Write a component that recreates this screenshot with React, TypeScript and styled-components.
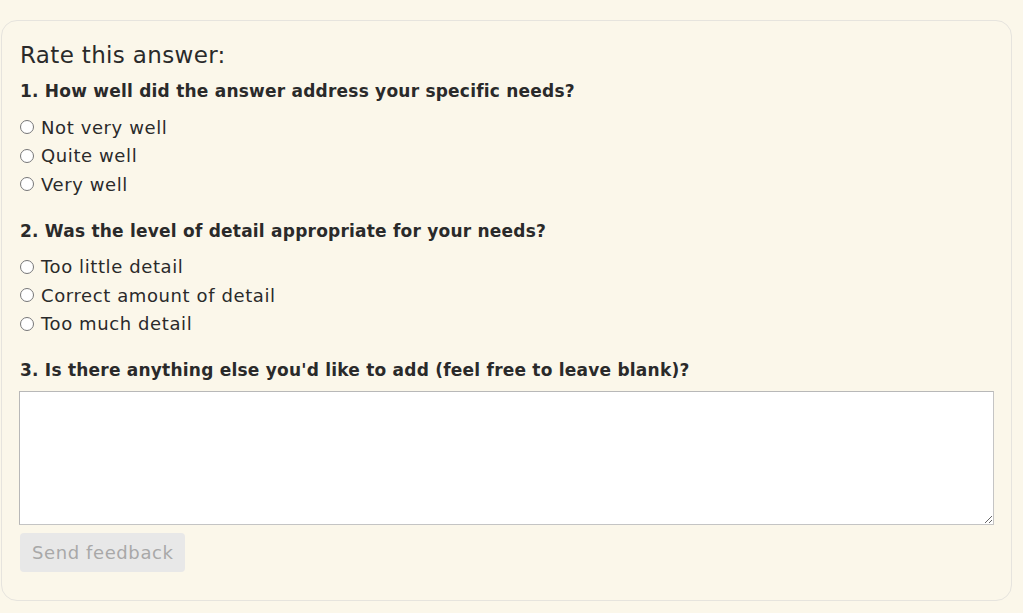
import React from "react";
import styled, { createGlobalStyle } from "styled-components";

const Global = createGlobalStyle`
  html, body { margin: 0; padding: 0; background: #fbf7ea; }
  body { font-family: "DejaVu Sans", "Open Sans", sans-serif; color: #2a2a2a; }
`;

const Page = styled.div`
  padding: 20px 11px 12px 1px;
`;

const Panel = styled.form`
  box-sizing: border-box;
  height: 581px;
  border: 1px solid #e6e4de;
  border-radius: 16px;
  background: #fbf7ea;
  padding: 18px 18px 0 18px;
  display: flex;
  flex-direction: column;
`;

const Title = styled.h2`
  margin: 0;
  font-size: 23px;
  font-weight: 400;
  letter-spacing: 0.35px;
  line-height: 32px;
`;

const Question = styled.h3<{ $gap: number }>`
  margin: 0;
  font-size: 17px;
  font-weight: 700;
  letter-spacing: 0.22px;
  line-height: 24px;
  margin-top: ${(p) => p.$gap}px;
`;

const Options = styled.div`
  display: flex;
  flex-direction: column;
  margin-top: 10px;
`;

const Option = styled.label`
  display: flex;
  align-items: center;
  height: 28.5px;
  font-size: 18px;
  letter-spacing: 0.6px;
  gap: 7px;
`;

const Radio = styled.input`
  margin: 0;
  width: 14px;
  height: 14px;
`;

const TextArea = styled.textarea`
  box-sizing: border-box;
  margin: 9px 0 0 -1px;
  width: 975px;
  height: 134px;
  border: 1px solid #c4c4c4;
  border-top-color: #b8b8b8;
  border-left-color: #b8b8b8;
  background: #fff;
  font-family: inherit;
`;

const Button = styled.button`
  align-self: flex-start;
  margin-top: 8px;
  margin-left: 0;
  height: 39px;
  padding: 0 11px 0 12px;
  border: none;
  border-radius: 4px;
  background: #e8e8e8;
  color: #a8a8a8;
  font-family: inherit;
  font-size: 18px;
  letter-spacing: 0.6px;
`;

const q1 = ["Not very well", "Quite well", "Very well"];
const q2 = ["Too little detail", "Correct amount of detail", "Too much detail"];

export default function App() {
  return (
    <>
      <Global />
      <Page>
        <Panel onSubmit={(e) => e.preventDefault()}>
          <Title>Rate this answer:</Title>
          <Question $gap={8}>1. How well did the answer address your specific needs?</Question>
          <Options>
            {q1.map((o) => (
              <Option key={o}>
                <Radio type="radio" name="q1" />
                {o}
              </Option>
            ))}
          </Options>
          <Question $gap={20}>2. Was the level of detail appropriate for your needs?</Question>
          <Options>
            {q2.map((o) => (
              <Option key={o}>
                <Radio type="radio" name="q2" />
                {o}
              </Option>
            ))}
          </Options>
          <Question $gap={20}>3. Is there anything else you'd like to add (feel free to leave blank)?</Question>
          <TextArea />
          <Button type="submit" disabled>Send feedback</Button>
        </Panel>
      </Page>
    </>
  );
}
